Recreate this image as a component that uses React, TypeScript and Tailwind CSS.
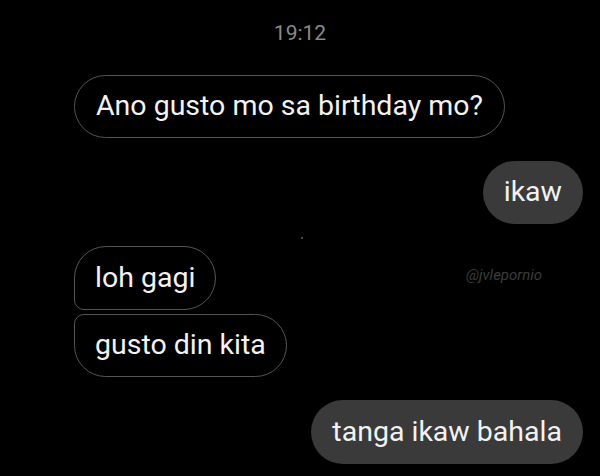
export default function App() {
  return (
    <div className="relative w-[600px] h-[476px] bg-black overflow-hidden font-['Roboto',sans-serif] text-[#f2f2f2]">
      <div className="pt-[20px] text-center text-[21px] leading-[26px] text-[#8a8a8a]">19:12</div>

      <div className="flex flex-col pl-[74px] pr-[17px] pt-[29px]">
        <div className="self-start h-[63px] flex items-center px-[21px] rounded-full border-[1.5px] border-[#555555] text-[28.5px]">
          Ano gusto mo sa birthday mo?
        </div>

        <div className="self-end mt-[23px] h-[63px] flex items-center px-[21px] rounded-full bg-[#3a3a3a] text-[28.5px]">
          ikaw
        </div>

        <div className="self-start mt-[22px] h-[64px] flex items-center px-[20px] rounded-[32px] rounded-bl-[10px] border-[1.5px] border-[#555555] text-[28.5px]">
          loh gagi
        </div>

        <div className="self-start mt-[4px] h-[63px] flex items-center px-[20px] rounded-[32px] rounded-tl-[10px] border-[1.5px] border-[#555555] text-[28.5px]">
          gusto din kita
        </div>

        <div className="self-end mt-[23px] h-[64px] flex items-center px-[21px] rounded-full bg-[#3a3a3a] text-[28.5px]">
          tanga ikaw bahala
        </div>
      </div>

      <div className="absolute left-[466px] top-[264px] text-[15px] italic text-[#3c3c3c]">@jvlepornio</div>
      <div className="absolute left-[301px] top-[237px] w-[2px] h-[2px] rounded-full bg-[#666]"></div>
    </div>
  );
}
